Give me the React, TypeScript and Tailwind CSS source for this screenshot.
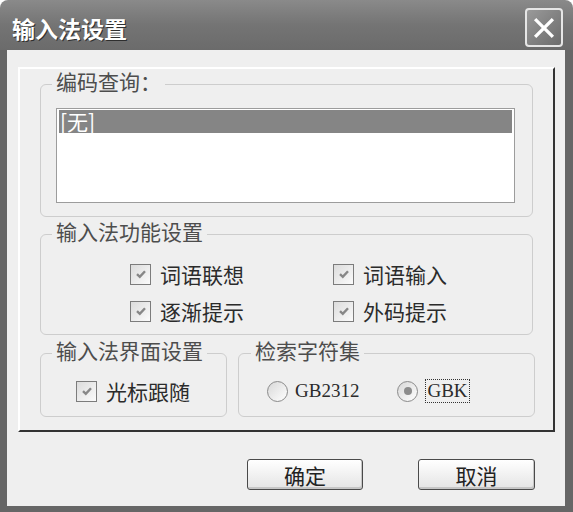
import React from "react";

const cjk = "font-['Noto_Sans_CJK_SC','Noto_Sans',sans-serif]";

function CheckBox({ label }: { label: string }) {
  return (
    <label className="flex items-center h-[24px] gap-[9px]">
      <span className="w-[21px] h-[21px] border border-[#7c7c7c] bg-linear-to-br from-[#dcdcdc] to-[#fbfbfb] flex items-center justify-center">
        <svg viewBox="0 0 12 12" className="w-[12px] h-[12px]">
          <path d="M2 6.2 L4.8 8.8 L10 3.2" stroke="#878787" strokeWidth="2.4" fill="none" />
        </svg>
      </span>
      <span className="text-[21px] leading-[24px] text-[#2b2b2b]">{label}</span>
    </label>
  );
}

function Radio({ label, checked }: { label: string; checked?: boolean }) {
  return (
    <label className="flex items-center h-[26px]">
      <span className="w-[21px] h-[21px] rounded-full border border-[#8a8a8a] bg-linear-to-br from-[#d8d8d8] to-white flex items-center justify-center">
        {checked && <span className="w-[8px] h-[8px] rounded-full bg-[#8c8c8c]" />}
      </span>
      <span
        className={
          "ml-[7px] font-['Liberation_Serif',serif] text-[19px] leading-[22px] text-[#2b2b2b] " +
          (checked ? "border border-dotted border-[#333] px-[1px]" : "")
        }
      >
        {label}
      </span>
    </label>
  );
}

function Legend({ text, ml = "ml-[11px]" }: { text: string; ml?: string }) {
  return (
    <legend className={`${ml} px-[4px] pb-[7px] text-[21px] leading-[24px] text-[#4d4d4d]`}>{text}</legend>
  );
}

export default function App() {
  return (
    <div className={`w-[573px] h-[512px] flex flex-col bg-white ${cjk}`}>
      {/* title bar */}
      <div className="h-[50px] shrink-0 rounded-t-[8px] bg-linear-to-b from-[#8a8a8a] via-[#747474] to-[#6b6b6b] flex items-center pt-[5px] pl-[12px] pr-[10px]">
        <span className="text-white text-[23px] font-bold leading-[28px] [text-shadow:1px_1px_0_#2e2e2e]">
          输入法设置
        </span>
        <div className="ml-auto w-[38px] h-[39px] rounded-[4px] border-2 border-[#e6e6e6] bg-linear-to-br from-[#9a9a9a] to-[#6c6c6c] flex items-center justify-center">
          <svg viewBox="0 0 20 20" className="w-[22px] h-[22px]">
            <path d="M3 3 L17 17 M17 3 L3 17" stroke="white" strokeWidth="3" strokeLinecap="square" />
          </svg>
        </div>
      </div>

      {/* client area */}
      <div className="flex-1 flex flex-col bg-[#efefef] border-l-[7px] border-r-[8px] border-b-[6px] border-[#666666]">
        <div className="mt-[17px] ml-[11px] mr-[10px] h-[365px] border-2 border-t-white border-l-white border-r-[#333333] border-b-[#333333] flex flex-col">
          {/* 编码查询 */}
          <fieldset className="ml-[20px] w-[493px] border border-[#cdcdcd] rounded-[6px] pb-[13px]">
            <Legend text="编码查询：" />
            <div className="mt-[8px] ml-[15px] w-[459px] h-[95px] border border-[#9c9c9c] bg-white pt-[1px] px-[2px]">
              <div className="h-[23px] bg-[#858585] text-white text-[21px] leading-[23px] pl-[1px]">[无]</div>
            </div>
          </fieldset>

          {/* 输入法功能设置 */}
          <fieldset className="mt-[2px] ml-[20px] w-[493px] border border-[#cdcdcd] rounded-[6px]">
            <Legend text="输入法功能设置" />
            <div className="grid grid-cols-[203px_auto] gap-y-[13px] pl-[89px] pt-[12px] pb-[11px]">
              <CheckBox label="词语联想" />
              <CheckBox label="词语输入" />
              <CheckBox label="逐渐提示" />
              <CheckBox label="外码提示" />
            </div>
          </fieldset>

          <div className="mt-[3px] ml-[20px] flex gap-[11px]">
            <fieldset className="w-[187px] border border-[#cdcdcd] rounded-[6px]">
              <Legend text="输入法界面设置" />
              <div className="pl-[35px] pt-[10px] pb-[13px]">
                <CheckBox label="光标跟随" />
              </div>
            </fieldset>
            <fieldset className="w-[297px] border border-[#cdcdcd] rounded-[6px]">
              <Legend text="检索字符集" ml="ml-[12px]" />
              <div className="flex items-center gap-[38px] pl-[28px] pt-[9px] pb-[12px]">
                <Radio label="GB2312" />
                <Radio label="GBK" checked />
              </div>
            </fieldset>
          </div>
        </div>

        {/* buttons */}
        <div className="mt-[27px] pr-[30px] flex justify-end gap-[55px]">
          <button className="w-[116px] h-[31px] rounded-[3px] border border-[#4a4a4a] bg-linear-to-b from-white to-[#e4e4e4] shadow-[inset_-1px_-2px_0_#c6c6c6] text-[21px] leading-[24px] text-[#222]">
            确定
          </button>
          <button className="w-[117px] h-[31px] rounded-[3px] border border-[#4a4a4a] bg-linear-to-b from-white to-[#e4e4e4] shadow-[inset_-1px_-2px_0_#c6c6c6] text-[21px] leading-[24px] text-[#222]">
            取消
          </button>
        </div>
      </div>
    </div>
  );
}
